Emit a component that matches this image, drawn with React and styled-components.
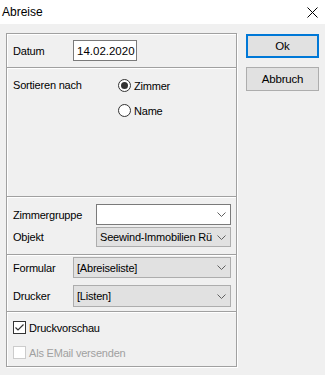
import React from 'react';
import styled, { createGlobalStyle } from 'styled-components';

const GlobalStyle = createGlobalStyle`
  html, body {
    margin: 0;
    padding: 0;
  }
  body {
    background: #f0f0f0;
    font-family: "Liberation Sans", Arial, sans-serif;
    font-size: 11px;
    color: #000;
  }
`;

const Window = styled.div`
  width: 325px;
  height: 375px;
  background: #f0f0f0;
  display: flex;
  flex-direction: column;
  overflow: hidden;
`;

const TitleBar = styled.div`
  height: 24px;
  flex: none;
  background: #fff;
  display: flex;
  align-items: center;
  justify-content: space-between;
  padding: 0 7px 0 2px;
  font-size: 12px;
`;

const Body = styled.div`
  display: flex;
  align-items: flex-start;
  gap: 9px;
  padding: 9px 6px 0 6px;
`;

const Panel = styled.div`
  width: 232px;
  height: 334px;
  box-sizing: border-box;
  border: 1px solid #a0a0a0;
  box-shadow: 1px 1px 0 #fff, inset 1px 1px 0 #fff;
  display: flex;
  flex-direction: column;
`;

const Section = styled.div`
  height: ${p => p.h}px;
  box-sizing: border-box;
  padding: ${p => p.pad || '0'} 5px 0 6px;
  display: flex;
  flex-direction: column;
  gap: ${p => p.gap || 0}px;
  justify-content: ${p => p.center ? 'center' : 'flex-start'};
`;

const Divider = styled.div`
  height: 0;
  border-top: 1px solid #a0a0a0;
  border-bottom: 1px solid #fff;
`;

const Row = styled.div`
  display: flex;
  align-items: ${p => p.top ? 'flex-start' : 'center'};
`;

const Label = styled.div`
  width: ${p => p.w}px;
  flex: none;
  letter-spacing: -0.2px;
  line-height: ${p => p.lh || 'normal'};
`;

const TextBox = styled.div`
  width: 64px;
  height: 21px;
  box-sizing: border-box;
  border: 1px solid #7a7a7a;
  background: #fff;
  padding: 0 3px;
  display: flex;
  align-items: center;
  font-size: 11.5px;
`;

const RadioGroup = styled.div`
  display: flex;
  flex-direction: column;
`;

const Option = styled.label`
  display: flex;
  align-items: center;
  gap: 3px;
  height: 25px;
  letter-spacing: -0.2px;
  color: ${p => p.disabled ? '#a0a0a0' : '#000'};
`;

const Combo = styled.div`
  flex: 1;
  height: ${p => p.h || 21}px;
  box-sizing: border-box;
  border: 1px solid ${p => p.white ? '#7a7a7a' : '#adadad'};
  background: ${p => p.white ? '#fff' : '#e1e1e1'};
  display: flex;
  align-items: center;
  justify-content: space-between;
  padding: 0 4px 0 3px;
  letter-spacing: -0.2px;
  white-space: nowrap;
  overflow: hidden;
`;

const ButtonColumn = styled.div`
  display: flex;
  flex-direction: column;
  gap: 9px;
  padding-top: 1px;
`;

const Button = styled.button`
  width: 73px;
  height: 24px;
  box-sizing: border-box;
  background: #e1e1e1;
  border: ${p => p.primary ? '2px solid #0078d7' : '1px solid #adadad'};
  font-family: inherit;
  font-size: 11.5px;
  color: #000;
  padding: 0;
  letter-spacing: -0.2px;
`;

const Chevron = () => (
  <svg width="9" height="5" viewBox="0 0 9 5">
    <polyline points="0.5,0.5 4.5,4.5 8.5,0.5" fill="none" stroke="#606060" strokeWidth="1" />
  </svg>
);

const Radio = ({ checked }) => (
  <svg width="13" height="13" viewBox="0 0 13 13">
    <circle cx="6.5" cy="6.5" r="6" fill="#fff" stroke="#333" />
    {checked && <circle cx="6.5" cy="6.5" r="3.5" fill="#333" />}
  </svg>
);

const Check = ({ checked, disabled }) => (
  <svg width="13" height="13" viewBox="0 0 13 13">
    <rect x="0.5" y="0.5" width="12" height="12" fill="#fff" stroke={disabled ? '#cccccc' : '#333'} />
    {checked && <polyline points="2.5,6.5 5,9 10.5,3.5" fill="none" stroke="#333" strokeWidth="1.2" />}
  </svg>
);

const CloseIcon = () => (
  <svg width="11" height="11" viewBox="0 0 11 11">
    <path d="M0.5 0.5 L10.5 10.5 M10.5 0.5 L0.5 10.5" stroke="#000" strokeWidth="1" />
  </svg>
);

export default function App() {
  return (
    <Window>
      <GlobalStyle />
      <TitleBar>
        <span>Abreise</span>
        <CloseIcon />
      </TitleBar>
      <Body>
        <Panel>
          <Section h={33} center>
            <Row>
              <Label w={60}>Datum</Label>
              <TextBox>14.02.2020</TextBox>
            </Row>
          </Section>
          <Divider />
          <Section h={127} pad="4px">
            <Row top>
              <Label w={105} lh="25px">Sortieren nach</Label>
              <RadioGroup>
                <Option><Radio checked />Zimmer</Option>
                <Option><Radio />Name</Option>
              </RadioGroup>
            </Row>
          </Section>
          <Divider />
          <Section h={56} pad="6px" gap={2}>
            <Row>
              <Label w={83}>Zimmergruppe</Label>
              <Combo white><span /><Chevron /></Combo>
            </Row>
            <Row>
              <Label w={83}>Objekt</Label>
              <Combo h={20}><span>Seewind-Immobilien Rü</span><Chevron /></Combo>
            </Row>
          </Section>
          <Divider />
          <Section h={55} pad="1px" gap={7}>
            <Row>
              <Label w={60}>Formular</Label>
              <Combo><span>[Abreiseliste]</span><Chevron /></Combo>
            </Row>
            <Row>
              <Label w={60}>Drucker</Label>
              <Combo h={22}><span>[Listen]</span><Chevron /></Combo>
            </Row>
          </Section>
          <Divider />
          <Section h={53} pad="2px">
            <Option><Check checked />Druckvorschau</Option>
            <Option disabled><Check disabled />Als EMail versenden</Option>
          </Section>
        </Panel>
        <ButtonColumn>
          <Button primary>Ok</Button>
          <Button>Abbruch</Button>
        </ButtonColumn>
      </Body>
    </Window>
  );
}
